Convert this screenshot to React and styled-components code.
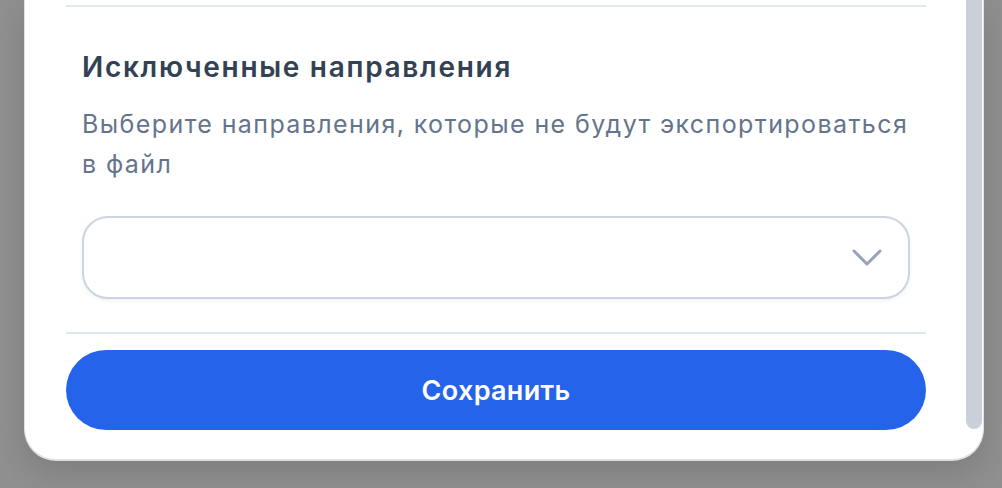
import React from 'react';
import styled, { createGlobalStyle } from 'styled-components';

const GlobalStyle = createGlobalStyle`
  html, body {
    margin: 0;
    height: 100%;
    background: #8f8f8f;
  }
  body {
    font-family: Inter, "Noto Sans", sans-serif;
    -webkit-font-smoothing: antialiased;
  }
  #root {
    height: 100%;
  }
`;

const Page = styled.div`
  display: flex;
  align-items: flex-start;
  padding: 0 18px 0 24px;
`;

// modal card, scrolled to its bottom
const Card = styled.div`
  flex: 1;
  display: flex;
  background: #ffffff;
  border: 1px solid #dde1e7;
  border-top: none;
  border-bottom-width: 2px;
  border-radius: 0 0 32px 32px;
  box-shadow: 0 12px 30px rgba(0, 0, 0, 0.12);
  overflow: hidden;
`;

const Content = styled.div`
  flex: 1;
  display: flex;
  flex-direction: column;
  padding: 5px 40px 29px 41px;
`;

const ScrollTrack = styled.div`
  width: 16px;
  margin-right: 1px;
  display: flex;
  flex-direction: column;
`;

const ScrollThumb = styled.div`
  height: 429px;
  background: #c9d0da;
  border-radius: 0 0 8px 8px;
`;

const Divider = styled.div`
  height: 2px;
  background: #e2e8f0;
`;

const Section = styled.section`
  display: flex;
  flex-direction: column;
  padding: 42px 16px 33px;
`;

const Title = styled.h3`
  margin: 0;
  font-size: 28px;
  line-height: 36px;
  font-weight: 600;
  letter-spacing: 1.7px;
  color: #334155;
`;

const Hint = styled.p`
  margin: 19px 0 0;
  font-size: 25px;
  line-height: 40px;
  font-weight: 400;
  letter-spacing: 1.4px;
  color: #64748b;
`;

const SelectBox = styled.button`
  margin-top: 32px;
  height: 83px;
  display: flex;
  align-items: center;
  justify-content: flex-end;
  padding: 0 26px;
  background: #ffffff;
  border: 2px solid #cbd5e1;
  border-radius: 26px;
  box-shadow: 0 2px 4px rgba(15, 23, 42, 0.05);
  cursor: pointer;
`;

const Chevron = () => (
  <svg width="30" height="18" viewBox="0 0 30 18" fill="none">
    <polyline
      points="2,2 15,15 28,2"
      stroke="#94a3b8"
      strokeWidth="3"
      strokeLinecap="round"
      strokeLinejoin="round"
    />
  </svg>
);

const SaveButton = styled.button`
  margin-top: 16px;
  height: 80px;
  border: none;
  border-radius: 40px;
  background: #2563eb;
  color: #ffffff;
  font-family: inherit;
  font-size: 27px;
  font-weight: 600;
  letter-spacing: 0.3px;
  cursor: pointer;
`;

export default function App() {
  return (
    <>
      <GlobalStyle />
      <Page>
        <Card>
          <Content>
            <Divider />
            <Section>
              <Title>Исключенные направления</Title>
              <Hint>Выберите направления, которые не будут экспортироваться в файл</Hint>
              <SelectBox type="button" aria-label="Исключенные направления">
                <Chevron />
              </SelectBox>
            </Section>
            <Divider />
            <SaveButton type="button">Сохранить</SaveButton>
          </Content>
          <ScrollTrack>
            <ScrollThumb />
          </ScrollTrack>
        </Card>
      </Page>
    </>
  );
}
